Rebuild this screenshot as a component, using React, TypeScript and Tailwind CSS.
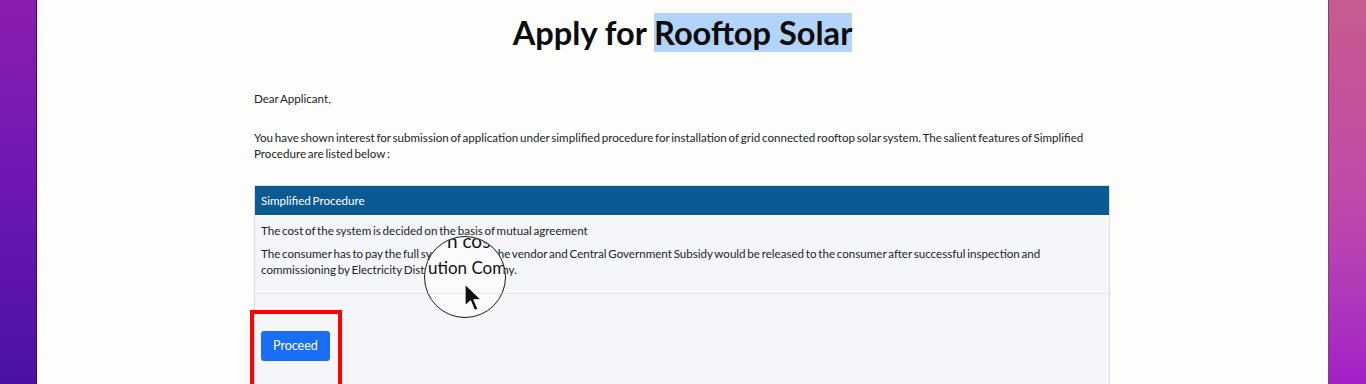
import React from 'react';

const features = [
  'The cost of the system is decided on the basis of mutual agreement',
  'The consumer has to pay the full system cost to the vendor and Central Government Subsidy would be released to the consumer after successful inspection and commissioning by Electricity Distribution Company.',
];

function Magnifier() {
  return (
    <div className="absolute left-[424px] top-[236px] w-[82px] h-[82px] rounded-full border-[1.5px] border-[#1a1a1a] bg-[#fbfbfb] overflow-hidden">
      <div className="absolute left-[22px] top-[-6px] text-[19px] text-[#111] whitespace-nowrap leading-none">n cost</div>
      <div className="absolute left-[3px] top-[22px] text-[17px] text-[#111] whitespace-nowrap leading-none">ution Com</div>
      <div className="absolute left-0 right-0 top-[56px] h-px bg-[#e4e6ea]" />
      <svg className="absolute left-[38px] top-[46px]" width="20" height="30" viewBox="0 0 20 30">
        <path d="M2 1 L2 23 L7.5 18 L11.5 27.5 L15 26 L11 16.8 L18.5 16.8 Z" fill="#111" stroke="#fff" strokeWidth="1.2" strokeLinejoin="round" />
      </svg>
    </div>
  );
}

export default function App() {
  return (
    <div className="relative flex w-[1366px] h-[384px] overflow-hidden font-['Lato','Open_Sans',sans-serif] text-[#212529]">
      <div className="w-[37px] shrink-0 bg-gradient-to-b from-[#8c1cb0] via-[#6c16b4] to-[#4a12a2] border-r border-[#3a0a70]" />

      <div className="flex-1 bg-[#fdfdfc] flex flex-col items-center">
        <h1 className="mt-[14px] text-[32.6px] font-bold leading-[38px] text-[#0c0c0c]">
          Apply for <span className="bg-[#b3d3f8]">Rooftop Solar</span>
        </h1>

        <div className="w-[856px] mt-[39px] ml-[-1px] text-[11.6px] leading-[16px] [word-spacing:-1.2px]">
          <p>Dear Applicant,</p>
          <p className="mt-[23px] leading-[15.5px]">
            You have shown interest for submission of application under simplified procedure for installation of grid connected rooftop solar system. The salient features of Simplified Procedure are listed below :
          </p>

          <div className="mt-[24px] border border-[#dadde2] bg-[#f4f6f9]">
            <div className="bg-[#0b5a94] text-white h-[29px] px-[6px] flex items-center">Simplified Procedure</div>
            <div className="px-[6px] pt-[8px] pb-[15px] flex flex-col gap-[7px] border-b border-[#e2e4e8]">
              {features.map((f, i) => (
                <p key={i} className="pr-[8px]">{f}</p>
              ))}
            </div>
            <div className="h-[100px] px-[6px] pt-[37px]">
              <button className="bg-[#1a6ef5] text-white rounded-[3px] px-[12px] h-[30px] text-[12.5px] [word-spacing:0]">Proceed</button>
            </div>
          </div>
        </div>
      </div>

      <div className="w-[38px] shrink-0 bg-gradient-to-b from-[#c65b8f] via-[#c04aa8] to-[#a21ec8] border-l border-[#7a4a6a]" />

      <div className="absolute left-[250px] top-[310px] w-[92px] h-[80px] border-[4px] border-[#ff0000]" />
      <Magnifier />
    </div>
  );
}
